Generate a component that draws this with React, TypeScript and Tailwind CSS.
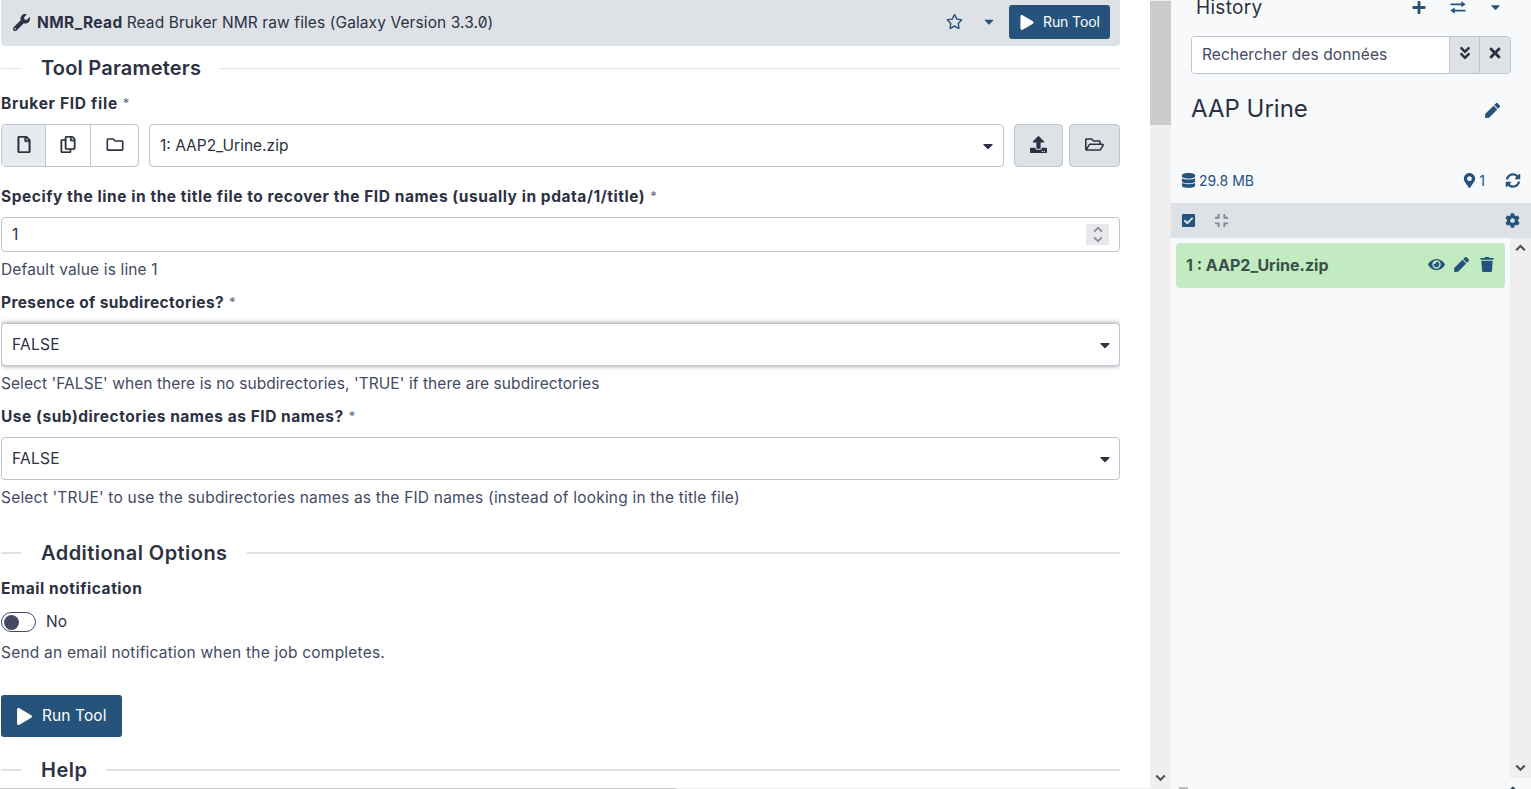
import React, { useState } from "react";
import {
  FaWrench, FaRegStar, FaCaretDown, FaPlay, FaRegFile, FaRegCopy, FaRegFolder, FaUpload, FaRegFolderOpen,
  FaPlus, FaTimes, FaAngleDoubleDown, FaPen, FaDatabase, FaMapMarkerAlt, FaSyncAlt, FaCheckSquare,
  FaCompress, FaCog, FaEye, FaTrash,
} from "react-icons/fa";

function Chevron({ up = false, color = "#555", w = 11, stroke = 2.2 }: { up?: boolean; color?: string; w?: number; stroke?: number }) {
  return (
    <svg width={w} height={w * 0.7} viewBox="0 0 11 8" fill="none" stroke={color} strokeWidth={stroke}>
      <path d={up ? "M1 6.5 5.5 2 10 6.5" : "M1 1.5 5.5 6 10 1.5"} />
    </svg>
  );
}

function Divider({ title, className, line, space }: { title: string; className: string; line: string; space: string }) {
  return (
    <div className={`flex h-[26px] items-center ${className}`}>
      <span className={`w-5 bg-[#dee2e6] ${line}`} />
      <h2 className={`mr-[19px] ml-5 whitespace-nowrap text-[20px] leading-[26px] font-semibold ${space}`}>{title}</h2>
      <span className={`flex-1 bg-[#dee2e6] ${line}`} />
    </div>
  );
}

function Label({ text, star = true, className }: { text: string; star?: boolean; className: string }) {
  return (
    <div className={`flex h-6 items-center pt-0.5 whitespace-nowrap font-bold ${className}`}>
      {text}
      {star && <span className="ml-[5px] text-[13px] font-normal tracking-normal text-[#5d6684]">*</span>}
    </div>
  );
}

function Help({ text, className }: { text: string; className: string }) {
  return <p className={`h-6 whitespace-nowrap leading-[26px] text-[#444a66] ${className}`}>{text}</p>;
}

function Select({ shadow }: { shadow: string }) {
  return (
    <div className={`flex h-[43px] items-center justify-between rounded border border-[#bdc6d0] bg-white pr-2 pl-2.5 ${shadow}`}>
      <span className="tracking-[0.3px]">FALSE</span>
      <FaCaretDown className="mt-px h-4 w-[12px]" />
    </div>
  );
}

function ToolForm() {
  const [email, setEmail] = useState(false);
  return (
    <main className="h-[788px] w-[1119px] overflow-hidden">
      <header className="flex h-[46px] items-center rounded-b bg-[#dee2e6] pr-2.5 pl-3">
        <FaWrench className="mb-0.5 h-[17px] w-[17px]" />
        <span className="mb-px ml-[7px] font-bold tracking-[0.4px]">NMR_Read</span>
        <span className="mb-px ml-1 flex-1 tracking-[0.1px] [font-feature-settings:'zero']">Read Bruker NMR raw files (Galaxy Version 3.3.0)</span>
        <FaRegStar className="mb-[3px] h-[15px] w-[17px] text-[#25537b]" />
        <FaCaretDown className="mr-[14px] mb-[3px] ml-[20px] h-[15px] w-[12px] text-[#25537b]" />
        <button className="mb-0.5 flex h-[34px] w-[101px] items-center rounded-[3px] bg-[#25537b] pl-[11px] text-[14px] text-white">
          <FaPlay className="mr-[9px] h-[15px] w-[14px]" />
          <span className="mb-px whitespace-nowrap tracking-[-0.1px]">Run Tool</span>
        </button>
      </header>
      <Divider title="Tool Parameters" className="mt-[9px]" line="h-px" space="tracking-[0.2px]" />
      <Label text="Bruker FID file" className="mt-[10px] tracking-[0.7px]" />
      <div className="mt-[9px] flex h-[43px]">
        <div className="flex w-[138px] divide-x divide-[#bdc6d0] overflow-hidden rounded border border-[#bdc6d0]">
          <button className="flex w-[44px] items-center justify-center bg-[#e8ebed]"><FaRegFile className="mb-0.5 h-[17px] w-[14px]" strokeWidth={12} stroke="currentColor" /></button>
          <button className="flex w-[45px] items-center justify-center"><FaRegCopy className="mb-0.5 h-[17px] w-[16px]" strokeWidth={6} stroke="currentColor" /></button>
          <button className="flex flex-1 items-center justify-center"><FaRegFolder className="mb-0.5 h-[17px] w-[18px]" /></button>
        </div>
        <div className="ml-2.5 flex w-[855px] items-center justify-between rounded border border-[#bdc6d0] pr-[9px] pl-2.5">
          <span>1: AAP2_Urine.zip</span>
          <FaCaretDown className="mt-px h-4 w-[12px]" />
        </div>
        <button className="ml-2.5 flex w-[49px] items-center justify-center rounded border border-[#bdc6d0] bg-[#dee2e6]"><FaUpload className="mb-0.5 h-[17px] w-[17px]" /></button>
        <button className="ml-1.5 flex w-[51px] items-center justify-center rounded border border-[#bdc6d0] bg-[#dee2e6]"><FaRegFolderOpen className="mb-0.5 h-[17px] w-[19px]" /></button>
      </div>
      <Label text="Specify the line in the title file to recover the FID names (usually in pdata/1/title)" className="mt-[17px] tracking-[0.55px]" />
      <div className="mt-[9px] flex h-[35px] items-center justify-between rounded border border-[#bdc6d0] pr-2.5 pl-2.5">
        <span>1</span>
        <span className="flex h-[21px] w-[23px] flex-col items-center justify-center gap-[3px] bg-[#e9e9ed]">
          <Chevron up color="#8f8f9d" w={10} />
          <Chevron color="#8f8f9d" w={10} />
        </span>
      </div>
      <Help text="Default value is line 1" className="mt-[5px] tracking-[0.15px]" />
      <Label text="Presence of subdirectories?" className="mt-[9px] tracking-[0.38px]" />
      <div className="mt-[9px]"><Select shadow="relative shadow-[0_0_5px_rgba(60,65,75,0.55)]" /></div>
      <Help text="Select 'FALSE' when there is no subdirectories, 'TRUE' if there are subdirectories" className="mt-[5px] tracking-[0.07px]" />
      <Label text="Use (sub)directories names as FID names?" className="mt-[9px] tracking-[0.53px]" />
      <div className="mt-[9px]"><Select shadow="" /></div>
      <Help text="Select 'TRUE' to use the subdirectories names as the FID names (instead of looking in the title file)" className="mt-[5px] tracking-[0.2px]" />
      <Divider title="Additional Options" className="mt-[31px]" line="h-0.5" space="tracking-[0.45px]" />
      <Label text="Email notification" star={false} className="mt-[10px] tracking-[0.55px]" />
      <div className="mt-2.5 flex h-6 items-center">
        <button onClick={() => setEmail(!email)} className="flex h-5 w-[35px] items-center rounded-full border border-[#444a66] px-0.5">
          <span className="h-[15px] w-[15px] rounded-full bg-[#444a66]" />
        </button>
        <span className="ml-2.5">{email ? "Yes" : "No"}</span>
      </div>
      <Help text="Send an email notification when the job completes." className="mt-1.5 tracking-[0.22px]" />
      <button className="mt-[31px] flex h-[42px] w-[121px] items-center rounded-[3px] bg-[#25537b] pl-4 text-white">
        <FaPlay className="mr-2.5 h-[17px] w-[15px]" />
        <span className="whitespace-nowrap tracking-[0.1px]">Run Tool</span>
      </button>
      <Divider title="Help" className="mt-[20px]" line="h-0.5" space="tracking-[0.5px]" />
    </main>
  );
}

function HistoryPanel() {
  return (
    <aside className="flex h-[789px] w-[360px] flex-col overflow-hidden bg-[#f8f9fb]">
      <div className="flex h-[36px] shrink-0 pl-[25px] text-[#25537b]">
        <h2 className="h-4 w-[216px] text-[19px] leading-4 tracking-[0.3px] text-[#2c3143]">History</h2>
        <FaPlus className="h-[15px] w-[14px]" />
        <svg className="mt-px ml-6 h-[13px] w-[16px]" viewBox="0 0 16 13" fill="currentColor">
          <path d="M.5 2.4h10.8V.2L15.6 3.3 11.3 6.4V4.2H.5z M15.5 8.7H4.7V6.5L.4 9.6l4.3 3.1v-2.2h10.8z" />
        </svg>
        <FaCaretDown className="ml-[24px] h-[14px] w-[11px]" />
      </div>
      <div className="ml-5 flex h-[38px] w-[320px] shrink-0 overflow-hidden rounded border border-[#bdc6d0]">
        <input className="w-[257px] bg-white px-2.5 tracking-[0.1px] outline-none placeholder:text-[#444a66]" placeholder="Rechercher des données" />
        <button className="flex w-[30px] items-center justify-center border-l border-[#bdc6d0] bg-[#dee2e6]"><FaAngleDoubleDown className="mb-1 h-[16px] w-[12px]" /></button>
        <button className="flex flex-1 items-center justify-center border-l border-[#bdc6d0] bg-[#dee2e6]"><FaTimes className="mb-1 h-[16px] w-[12px]" /></button>
      </div>
      <div className="mt-[18px] flex h-[34px] shrink-0 items-center justify-between pr-[31px] pl-5">
        <h1 className="text-[24px] leading-[34px]">AAP Urine</h1>
        <FaPen className="mt-0.5 h-[15px] w-[15px] text-[#25537b]" />
      </div>
      <div className="mt-[42px] flex h-6 shrink-0 items-center pr-[10px] pl-2.5 text-[14px] text-[#25537b]">
        <FaDatabase className="h-[15px] w-[15px]" />
        <span className="ml-[3px] flex-1">29.8 MB</span>
        <FaMapMarkerAlt className="h-[15px] w-[13px]" />
        <span className="mr-5 ml-[3px]">1</span>
        <FaSyncAlt className="h-[15px] w-[16px]" />
      </div>
      <div className="mt-[11px] flex h-[35px] shrink-0 items-center bg-[#dee2e6] pr-[11px] pl-2.5 text-[#25537b]">
        <FaCheckSquare className="h-[15px] w-[15px]" />
        <FaCompress className="ml-[18px] h-[15px] w-[15px] text-[#7d8597]" />
        <span className="flex-1" />
        <FaCog className="h-[15px] w-[15px]" />
      </div>
      <div className="flex h-[540px] shrink-0">
        <div className="w-[339px] px-[5px] pt-[5px]">
          <div className="flex h-[45px] w-[329px] items-center rounded bg-[#c2ebc2] px-2.5 pb-0.5 text-[#25537b]">
            <span className="flex-1 text-[16px] font-bold text-[#3a5048]">1 : AAP2_Urine.zip</span>
            <FaEye className="mr-[9px] h-[15px] w-[17px]" />
            <FaPen className="mr-[11px] h-[15px] w-[15px]" />
            <FaTrash className="mr-px h-[15px] w-[14px]" />
          </div>
        </div>
        <div className="flex flex-1 flex-col items-center justify-between bg-[#efefef] pt-[6px] pb-[6px]">
          <Chevron up color="#505050" />
          <Chevron color="#505050" />
        </div>
      </div>
      <div className="flex items-start justify-between pt-[9px] pr-[16px] pl-2">
        <span className="h-0.5 w-[9px] bg-[#bdbdbd]" />
        <span className="h-1 w-1 rotate-45 bg-[#25537b]" />
      </div>
    </aside>
  );
}

export default function App() {
  return (
    <div className="flex h-[789px] w-[1531px] overflow-hidden bg-white font-['Inter','Liberation_Sans',sans-serif] text-[15.5px] text-[#2c3143]">
      <div className="flex w-[1150px] flex-col">
        <div className="pl-px"><ToolForm /></div>
        <div className="flex h-px bg-[#eeeeee]"><span className="w-[676px] bg-[#c8c8c8]" /></div>
      </div>
      <div className="flex w-[21px] flex-col items-center justify-between bg-[#efefef] pb-[7px]">
        <span className="mt-px h-[124px] w-full bg-[#cccccc]" />
        <Chevron color="#505050" />
      </div>
      <HistoryPanel />
    </div>
  );
}
